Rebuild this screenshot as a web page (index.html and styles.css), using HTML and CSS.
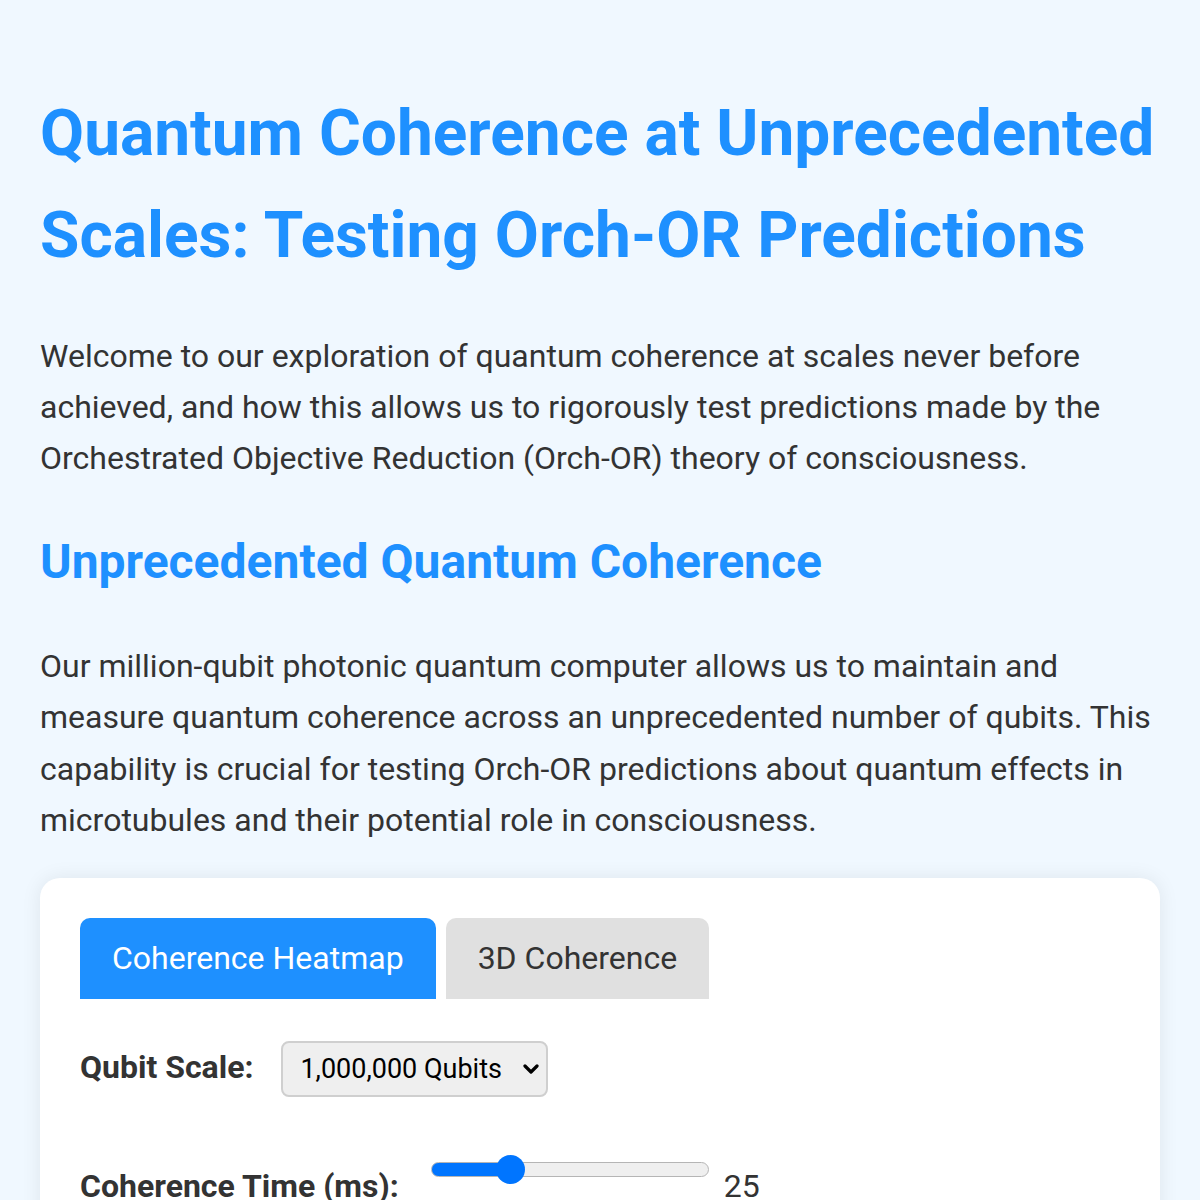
FILE: index.html
```html
<!DOCTYPE html>
<html lang="en">
<head>
    <meta charset="UTF-8">
    <meta name="viewport" content="width=device-width, initial-scale=1.0">
    <title>Quantum Coherence at Unprecedented Scales</title>
    <link rel="stylesheet" href="styles.css">
</head>
<body>
    <h1>Quantum Coherence at Unprecedented Scales: Testing Orch-OR Predictions</h1>

    <p>Welcome to our exploration of quantum coherence at scales never before achieved, and how this allows us to rigorously test predictions made by the Orchestrated Objective Reduction (Orch-OR) theory of consciousness.</p>

    <h2>Unprecedented Quantum Coherence</h2>

    <p>Our million-qubit photonic quantum computer allows us to maintain and measure quantum coherence across an unprecedented number of qubits. This capability is crucial for testing Orch-OR predictions about quantum effects in microtubules and their potential role in consciousness.</p>

    <div class="visualization">
        <div class="tabs">
            <button class="tab active">Coherence Heatmap</button>
            <button class="tab">3D Coherence</button>
        </div>

        <div class="control-group">
            <label for="qubit-scale">Qubit Scale:</label>
            <span class="select-wrap">
                <select id="qubit-scale">
                    <option>1,000 Qubits</option>
                    <option>10,000 Qubits</option>
                    <option>100,000 Qubits</option>
                    <option selected>1,000,000 Qubits</option>
                </select>
                <svg class="chevron" width="16" height="12" viewBox="0 0 16 12"><path d="M2 3 L8 9 L14 3" fill="none" stroke="#000" stroke-width="3.2" stroke-linecap="round" stroke-linejoin="round"/></svg>
            </span>
        </div>

        <div class="control-group">
            <label for="coherence-time">Coherence Time (ms):</label>
            <input type="range" id="coherence-time" class="slider" min="0" max="96" value="25">
            <span class="value">25</span>
        </div>

        <div class="heatmap"></div>
    </div>
</body>
</html>
```

FILE: styles.css
```css
body {
    font-family: Roboto, Arial, sans-serif;
    font-size: 32px;
    line-height: 1.6;
    color: #333;
    background-color: #f0f8ff;
    margin: 0;
    padding: 40px;
}
h1 {
    color: #1e90ff;
    font-size: 64px;
    margin: 43px 0;
}
h2 {
    color: #1e90ff;
    font-size: 48px;
    margin: 40px 0;
}
p {
    margin: 32px 0;
}
.visualization {
    background-color: #fff;
    border-radius: 20px;
    box-shadow: 0 0 20px rgba(0, 0, 0, 0.08);
    padding: 40px;
    margin: 32px 0;
}
.tabs {
    display: flex;
    gap: 10px;
    margin-bottom: 42px;
}
.tab {
    font-family: Roboto, Arial, sans-serif;
    font-size: 32px;
    line-height: 41px;
    padding: 20px 32px;
    border: none;
    border-radius: 10px 10px 0 0;
    background-color: #e0e0e0;
    color: #333;
    cursor: pointer;
}
.tab.active {
    background-color: #1e90ff;
    color: #fff;
}
.control-group {
    margin-bottom: 57px;
}
.control-group label {
    font-weight: bold;
    margin-right: 20px;
}
.select-wrap {
    position: relative;
    display: inline-block;
}
.select-wrap select {
    -webkit-appearance: none;
    appearance: none;
    font-family: Roboto, Arial, sans-serif;
    font-size: 27px;
    color: #000;
    height: 56px;
    padding: 0 44px 0 17px;
    background-color: #efefef;
    border: 2px solid #cfcfcf;
    border-radius: 8px;
}
.chevron {
    position: absolute;
    right: 9px;
    top: 22px;
}
.slider {
    -webkit-appearance: none;
    appearance: none;
    width: 278px;
    height: 32px;
    margin: 0 6px 0 4px;
    background: transparent;
    vertical-align: 11px;
}
.slider::-webkit-slider-runnable-track {
    height: 15px;
    border-radius: 8px;
    border: 1px solid #b5b5b5;
    background: linear-gradient(to right, #0075ff 0, #0075ff 29%, #efefef 29%, #efefef 100%);
}
.slider::-webkit-slider-thumb {
    -webkit-appearance: none;
    width: 29px;
    height: 29px;
    border-radius: 50%;
    background: #0075ff;
    margin-top: -8px;
}
.value {
    margin-left: 1px;
}
.heatmap {
    height: 400px;
    background-color: #f5f5f5;
    border-radius: 10px;
}
```
